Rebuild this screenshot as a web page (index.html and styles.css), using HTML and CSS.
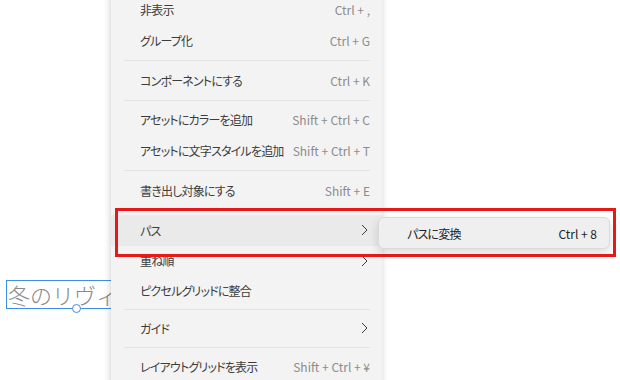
FILE: index.html
```html
<!DOCTYPE html>
<html lang="ja">
<head>
  <meta charset="UTF-8">
  <title>Context menu</title>
  <link rel="stylesheet" href="styles.css">
</head>
<body>
  <!-- Text layer on the artboard -->
  <div class="text-layer">
    <span class="text-layer-label">冬のリヴィエラ</span>
    <span class="text-layer-handle"></span>
  </div>

  <!-- Context menu -->
  <div class="menu">
    <div class="menu-item"><span class="label">非表示</span><span class="shortcut">Ctrl + ,</span></div>
    <div class="menu-item"><span class="label">グループ化</span><span class="shortcut">Ctrl + G</span></div>
    <div class="separator"></div>
    <div class="menu-item"><span class="label">コンポーネントにする</span><span class="shortcut">Ctrl + K</span></div>
    <div class="separator"></div>
    <div class="menu-item"><span class="label">アセットにカラーを追加</span><span class="shortcut">Shift + Ctrl + C</span></div>
    <div class="menu-item"><span class="label">アセットに文字スタイルを追加</span><span class="shortcut">Shift + Ctrl + T</span></div>
    <div class="separator"></div>
    <div class="menu-item"><span class="label">書き出し対象にする</span><span class="shortcut">Shift + E</span></div>
    <div class="separator"></div>
    <div class="menu-item active">
      <span class="label">パス</span>
      <svg class="chevron" width="7" height="12" viewBox="0 0 7 12"><polyline points="1,1 6,6 1,11"/></svg>
    </div>
    <div class="menu-item compact">
      <span class="label">重ね順</span>
      <svg class="chevron" width="7" height="12" viewBox="0 0 7 12"><polyline points="1,1 6,6 1,11"/></svg>
    </div>
    <div class="menu-item compact"><span class="label">ピクセルグリッドに整合</span></div>
    <div class="separator"></div>
    <div class="menu-item compact">
      <span class="label">ガイド</span>
      <svg class="chevron" width="7" height="12" viewBox="0 0 7 12"><polyline points="1,1 6,6 1,11"/></svg>
    </div>
    <div class="separator"></div>
    <div class="menu-item compact"><span class="label">レイアウトグリッドを表示</span><span class="shortcut">Shift + Ctrl + ¥</span></div>
  </div>

  <!-- Submenu for パス -->
  <div class="submenu">
    <div class="submenu-item"><span class="label">パスに変換</span><span class="shortcut">Ctrl + 8</span></div>
  </div>

  <!-- Red annotation box -->
  <div class="highlight-box"></div>
</body>
</html>
```

FILE: styles.css
```css
body {
  margin: 0;
  width: 620px;
  height: 380px;
  overflow: hidden;
  position: relative;
  background-color: #fff;
  font-family: "Noto Sans CJK JP", "Noto Sans", sans-serif;
  font-size: 12px;
  color: #3c3c3c;
}

/* Text layer on the canvas (runs on behind the menu) */
.text-layer {
  position: absolute;
  left: 6px;
  top: 280px;
  width: 110px;
  height: 29px;
  border: 1px solid #3d8fe6;
  box-sizing: border-box;
}
.text-layer-label {
  display: block;
  overflow: hidden;
  margin: -2px 0 0 1px;
  font-size: 22px;
  font-weight: 300;
  color: #8a8a8a;
  white-space: nowrap;
  line-height: 30px;
}
.text-layer-handle {
  position: absolute;
  left: 65px;
  bottom: -5px;
  width: 7px;
  height: 7px;
  border: 1px solid #3d8fe6;
  border-radius: 50%;
  background-color: #fff;
}

/* Context menu */
.menu {
  position: absolute;
  left: 111px;
  top: -6px;
  width: 271px;
  height: 400px;
  background-color: #f3f3f3;
  box-shadow: -2px 0 6px rgba(0,0,0,0.12), 2px 0 6px rgba(0,0,0,0.08);
}
.menu-item {
  display: flex;
  align-items: center;
  justify-content: space-between;
  height: 31px;
  padding: 0 12px 0 29px;
  white-space: nowrap;
}
.menu-item.compact {
  height: 29.5px;
}
.menu-item.active {
  background-color: #eaeaea;
}
.label {
  font-feature-settings: "palt";
  letter-spacing: -0.8px;
}
.shortcut {
  color: #8c8c8c;
}
.separator {
  height: 1px;
  margin: 3.85px 12px 3.85px 13px;
  background-color: #e2e2e2;
}
.chevron {
  margin-right: 2px;
}
.chevron polyline {
  fill: none;
  stroke: #3c3c3c;
  stroke-width: 1;
}

/* Submenu */
.submenu {
  position: absolute;
  left: 378px;
  top: 217px;
  width: 232px;
  height: 32px;
  box-sizing: border-box;
  background-color: #efefef;
  border: 1px solid #dadada;
  border-radius: 6px;
  box-shadow: 0 4px 10px rgba(0,0,0,0.14);
}
.submenu-item {
  display: flex;
  align-items: center;
  justify-content: space-between;
  height: 30px;
  padding: 0 12px 0 28px;
  color: #222;
}
.submenu-item .shortcut {
  color: #222;
}

/* Red annotation */
.highlight-box {
  position: absolute;
  left: 115px;
  top: 208px;
  width: 501px;
  height: 49px;
  box-sizing: border-box;
  border: 3px solid #e81818;
}
```
